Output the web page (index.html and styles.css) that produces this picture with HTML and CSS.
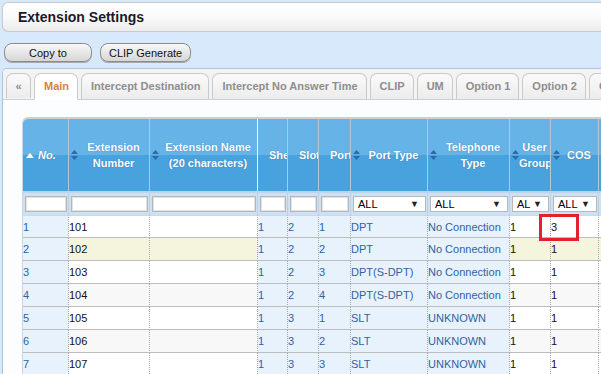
FILE: index.html
```html
<!doctype html>
<html lang="en">
<head>
    <meta charset="UTF-8">
    <meta name="viewport" content="width=device-width, initial-scale=1.0">
    <title>Extension Settings</title>
    <link rel="stylesheet" href="styles.css">
</head>
<body>

<div class="page">
    <div class="title_bar">Extension Settings</div>

    <div class="toolbar">
        <button class="btn btn_copy">Copy to</button>
        <button class="btn">CLIP Generate</button>
    </div>

    <div class="tab_panel">
        <ul class="tabs">
            <li class="tab tab_prev">&laquo;</li>
            <li class="tab active">Main</li>
            <li class="tab">Intercept Destination</li>
            <li class="tab">Intercept No Answer Time</li>
            <li class="tab">CLIP</li>
            <li class="tab">UM</li>
            <li class="tab">Option 1</li>
            <li class="tab">Option 2</li>
            <li class="tab">Option 3</li>
        </ul>

        <div class="tab_body">
            <div class="grid_wrap">
                <table class="grid">
                    <colgroup>
                        <col style="width:46px">
                        <col style="width:81px">
                        <col style="width:108px">
                        <col style="width:30px">
                        <col style="width:31px">
                        <col style="width:32px">
                        <col style="width:77px">
                        <col style="width:82px">
                        <col style="width:41px">
                        <col style="width:48px">
                        <col style="width:80px">
                    </colgroup>
                    <thead>
                    <tr class="head">
                        <th><div class="hcell"><svg class="icon asc" viewBox="0 0 8 5"><path d="M0 5L4 0L8 5Z"/></svg><span class="label no_label">No.</span></div></th>
                        <th><div class="hcell"><svg class="icon sort" viewBox="0 0 7 10"><path d="M0 4L3.5 0L7 4Z M0 6L3.5 10L7 6Z"/></svg><span class="label">Extension<br>Number</span></div></th>
                        <th class="light_sep"><div class="hcell"><svg class="icon sort" viewBox="0 0 7 10"><path d="M0 4L3.5 0L7 4Z M0 6L3.5 10L7 6Z"/></svg><span class="label">Extension Name<br>(20 characters)</span></div></th>
                        <th><div class="hcell"><span class="nosort"></span><span class="label">Shelf</span></div></th>
                        <th><div class="hcell"><span class="nosort"></span><span class="label">Slot</span></div></th>
                        <th><div class="hcell"><span class="nosort"></span><span class="label">Port</span></div></th>
                        <th><div class="hcell"><svg class="icon sort" viewBox="0 0 7 10"><path d="M0 4L3.5 0L7 4Z M0 6L3.5 10L7 6Z"/></svg><span class="label">Port Type</span></div></th>
                        <th><div class="hcell"><svg class="icon sort" viewBox="0 0 7 10"><path d="M0 4L3.5 0L7 4Z M0 6L3.5 10L7 6Z"/></svg><span class="label">Telephone<br>Type</span></div></th>
                        <th><div class="hcell"><svg class="icon sort" viewBox="0 0 7 10"><path d="M0 4L3.5 0L7 4Z M0 6L3.5 10L7 6Z"/></svg><span class="label">User<br>Group</span></div></th>
                        <th><div class="hcell"><svg class="icon sort" viewBox="0 0 7 10"><path d="M0 4L3.5 0L7 4Z M0 6L3.5 10L7 6Z"/></svg><span class="label">COS</span></div></th>
                        <th><div class="hcell"><svg class="icon sort" viewBox="0 0 7 10"><path d="M0 4L3.5 0L7 4Z M0 6L3.5 10L7 6Z"/></svg><span class="label">Ringing<br>Group</span></div></th>
                    </tr>
                    <tr class="filter">
                        <td><input class="finput" type="text"></td>
                        <td><input class="finput" type="text"></td>
                        <td><input class="finput" type="text"></td>
                        <td><input class="finput" type="text"></td>
                        <td><input class="finput" type="text"></td>
                        <td><input class="finput" type="text"></td>
                        <td><div class="fselect"><span>ALL</span><i>&#9660;</i></div></td>
                        <td><div class="fselect"><span>ALL</span><i>&#9660;</i></div></td>
                        <td><div class="fselect"><span>AL</span><i>&#9660;</i></div></td>
                        <td><div class="fselect"><span>ALL</span><i>&#9660;</i></div></td>
                        <td><div class="fselect"><span>ALL</span><i>&#9660;</i></div></td>
                    </tr>
                    </thead>
                    <tbody>
                    <tr>
                        <td class="b">1</td><td>101</td><td></td><td class="b">1</td><td class="b">2</td><td class="b">1</td>
                        <td class="b">DPT</td><td class="b">No Connection</td><td>1</td><td>3</td><td></td>
                    </tr>
                    <tr class="hover">
                        <td class="b">2</td><td>102</td><td></td><td class="b">1</td><td class="b">2</td><td class="b">2</td>
                        <td class="b">DPT</td><td class="b">No Connection</td><td>1</td><td>1</td><td></td>
                    </tr>
                    <tr>
                        <td class="b">3</td><td>103</td><td></td><td class="b">1</td><td class="b">2</td><td class="b">3</td>
                        <td class="b">DPT(S-DPT)</td><td class="b">No Connection</td><td>1</td><td>1</td><td></td>
                    </tr>
                    <tr class="alt">
                        <td class="b">4</td><td>104</td><td></td><td class="b">1</td><td class="b">2</td><td class="b">4</td>
                        <td class="b">DPT(S-DPT)</td><td class="b">No Connection</td><td>1</td><td>1</td><td></td>
                    </tr>
                    <tr>
                        <td class="b">5</td><td>105</td><td></td><td class="b">1</td><td class="b">3</td><td class="b">1</td>
                        <td class="b">SLT</td><td class="b">UNKNOWN</td><td>1</td><td>1</td><td></td>
                    </tr>
                    <tr class="alt">
                        <td class="b">6</td><td>106</td><td></td><td class="b">1</td><td class="b">3</td><td class="b">2</td>
                        <td class="b">SLT</td><td class="b">UNKNOWN</td><td>1</td><td>1</td><td></td>
                    </tr>
                    <tr>
                        <td class="b">7</td><td>107</td><td></td><td class="b">1</td><td class="b">3</td><td class="b">3</td>
                        <td class="b">SLT</td><td class="b">UNKNOWN</td><td>1</td><td>1</td><td></td>
                    </tr>
                    </tbody>
                </table>
                <!-- highlight box drawn over the COS cell of row 1 -->
                <div class="mark"></div>
            </div>
        </div>
    </div>
</div>

</body>
</html>
```

FILE: styles.css
```css
html, body {
    margin: 0;
    padding: 0;
    overflow: hidden;
}

body {
    background: #d8e9fb;
    font-family: "Liberation Sans", Arial, sans-serif;
    font-size: 11px;
    color: #000;
}

.page {
    width: 820px;
    padding-top: 2px;
    padding-left: 2px;
}

.title_bar {
    height: 28px;
    line-height: 28px;
    padding-left: 15px;
    border: 1px solid #c9c9c9;
    border-right: none;
    border-radius: 6px 0 0 6px;
    background: linear-gradient(#ffffff, #fafafa 50%, #ececec);
    font-size: 14px;
    font-weight: bold;
    color: #1a1a2a;
}

.toolbar {
    display: flex;
    gap: 8px;
    margin-top: 11px;
    padding-left: 2px;
}

.btn {
    height: 19px;
    padding: 0 8px;
    border: 1px solid #8c8c8c;
    border-radius: 8px;
    background: linear-gradient(#f8f8f8, #e6e6e6 55%, #d6d6d6);
    box-shadow: 0 1px 0 #a8a8a8;
    font-family: "Liberation Sans", Arial, sans-serif;
    font-size: 11px;
    color: #111;
}

.btn_copy {
    width: 88px;
}

.tab_panel {
    margin-top: 6px;
    border: 1px solid #a9c5e2;
    border-right: none;
    border-radius: 5px 0 0 0;
    background: #fcfdfe;
}

.tabs {
    display: flex;
    gap: 3px;
    margin: 0;
    padding: 4px 0 0 3px;
    list-style: none;
    background: #f3f3f3;
    border-bottom: 1px solid #cfcfcf;
    border-radius: 5px 0 0 0;
}

.tab {
    height: 25px;
    line-height: 25px;
    padding: 0 8px 0 9px;
    margin-bottom: -1px;
    border: 1px solid #cacaca;
    border-bottom: none;
    border-radius: 7px 7px 0 0;
    background: linear-gradient(#fafafa, #ececec);
    font-weight: bold;
    color: #8e8e8e;
    white-space: nowrap;
}

.tab_prev {
    box-sizing: border-box;
    width: 25px;
    padding: 0;
    text-align: center;
}

.tab.active {
    background: #fff;
    color: #d9813c;
    border-bottom: 1px solid #fff;
}

.tab_body {
    padding: 17px 0 0 19px;
    background: #fcfdfe;
}

.grid_wrap {
    position: relative;
    display: inline-block;
    border-top: 2px solid #cfcfcf;
    border-left: 1px solid #c8d6e4;
    border-radius: 6px 0 0 0;
    overflow: hidden;
}

.grid {
    border-collapse: separate;
    border-spacing: 0;
    table-layout: fixed;
    width: 656px;
}

.grid th,
.grid td {
    box-sizing: border-box;
    padding: 0;
    overflow: hidden;
    white-space: nowrap;
}

.head th {
    height: 72px;
    background: linear-gradient(#66b3e7 50%, #48a2de 50%);
    border-right: 1px solid #b9c6d2;
    color: #fff;
    font-weight: bold;
    text-shadow: 0 0 1px rgba(30, 80, 130, 0.6);
}

.head th.light_sep {
    border-right-color: #f4f8fc;
}

.hcell {
    display: flex;
    align-items: center;
    height: 72px;
    padding-left: 2px;
}

.icon {
    flex: none;
    display: block;
}

.sort {
    width: 7px;
    height: 10px;
    fill: #2f6aa3;
}

.asc {
    width: 8px;
    height: 5px;
    margin-left: 1px;
    fill: #fff;
}

.nosort {
    flex: none;
    width: 9px;
}

.label {
    flex: 1;
    min-width: 0;
    overflow: hidden;
    text-align: center;
    line-height: 16px;
    white-space: nowrap;
}

.no_label {
    font-style: italic;
    text-align: left;
    padding-left: 4px;
}

.filter td {
    height: 24px;
    background: #cde1f3;
    border-top: 2px solid #bcd5ec;
    border-right: 1px solid #bcd1e4;
    padding: 0 1px 0 2px;
}

.finput {
    box-sizing: border-box;
    display: block;
    width: 100%;
    height: 16px;
    margin: 0;
    border: 1px solid #b7b7b7;
    box-shadow: inset 0 0 0 1px #e2e2e2;
    background: #fff;
}

.fselect {
    box-sizing: border-box;
    display: flex;
    justify-content: space-between;
    align-items: center;
    height: 16px;
    padding: 0 6px 0 4px;
    border: 1px solid #b7b7b7;
    background: #fff;
    color: #000;
    font-size: 11px;
}

.fselect i {
    font-style: normal;
    font-size: 9px;
    color: #222;
}

tbody td {
    height: 23px;
    padding: 0 2px;
    background: #fff;
    border-right: 1px dotted #a9a9a9;
    border-bottom: 1px solid #bdbdbd;
    color: #111;
}

tbody tr:first-child td {
    border-top: 1px solid #c7dbee;
}

tbody td.b {
    background: #e7f2fd;
    color: #2f62a4;
}

tbody tr.alt td {
    background: #f8f8f8;
}

tbody tr.alt td.b {
    background: #e7f2fd;
}

tbody tr.hover td {
    background: #f5f4dc;
}

tbody tr.hover td.b {
    background: #e7f2fd;
}

.mark {
    position: absolute;
    left: 516px;
    top: 95px;
    width: 34px;
    height: 21px;
    border: 3px solid #e4202b;
}
```
